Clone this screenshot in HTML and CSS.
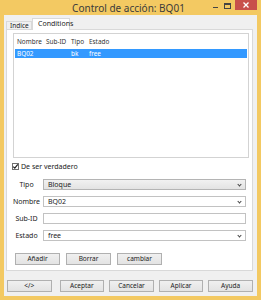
FILE: index.html
```html
<!DOCTYPE html>
<html lang="es">
<head>
<meta charset="utf-8">
<title>Control de acción: BQ01</title>
<link rel="stylesheet" href="styles.css">
</head>
<body>
<div class="window">
    <div class="titlebar">
        <div class="title">Control de acción: BQ01</div>
        <div class="controls">
            <span class="ctl min"><span class="dash"></span></span>
            <span class="ctl max"><span class="box"></span></span>
            <span class="ctl close">
                <svg width="6" height="6" viewBox="0 0 6 6"><path d="M0.5 0.5 L5.5 5.5 M5.5 0.5 L0.5 5.5" stroke="#fff" stroke-width="1.3"/></svg>
            </span>
        </div>
    </div>

    <div class="client">
        <div class="tabs">
            <div class="tab">Indice</div>
            <div class="tab active">Conditions</div>
        </div>

        <div class="panel">
            <div class="list">
                <div class="lrow head">
                    <span>Nombre</span><span>Sub-ID</span><span>Tipo</span><span>Estado</span>
                </div>
                <div class="lrow selected">
                    <span>BQ02</span><span></span><span>bk</span><span>free</span>
                </div>
            </div>

            <label class="check">
                <span class="cbox">
                    <svg width="7" height="7" viewBox="0 0 7 7"><path d="M1.2 3.6 L2.8 5.2 L5.8 1.4" fill="none" stroke="#222" stroke-width="1.2"/></svg>
                </span>
                De ser verdadero
            </label>

            <div class="form">
                <span class="lbl">Tipo</span>
                <div class="field select gray">Bloque<span class="arrow"></span></div>

                <span class="lbl">Nombre</span>
                <div class="field select">BQ02<span class="arrow"></span></div>

                <span class="lbl">Sub-ID</span>
                <div class="field"></div>

                <span class="lbl">Estado</span>
                <div class="field select">free<span class="arrow"></span></div>
            </div>

            <div class="actions">
                <button class="btn">Añadir</button>
                <button class="btn">Borrar</button>
                <button class="btn">cambiar</button>
            </div>
        </div>

        <div class="footer">
            <button class="btn first">&lt;/&gt;</button>
            <button class="btn">Aceptar</button>
            <button class="btn">Cancelar</button>
            <button class="btn">Aplicar</button>
            <button class="btn">Ayuda</button>
        </div>
    </div>
</div>
</body>
</html>
```

FILE: styles.css
```css
* {
    box-sizing: border-box;
}

body {
    margin: 0;
    width: 261px;
    height: 300px;
    font-family: "Noto Sans", "DejaVu Sans", sans-serif;
    font-size: 7px;
    color: #222;
}

.window {
    height: 300px;
    background: #f3c962;
    display: flex;
    flex-direction: column;
}

.titlebar {
    height: 15px;
    display: flex;
    padding-left: 48px;
}

.title {
    flex: 1;
    text-align: center;
    font-size: 10px;
    line-height: 16px;
    color: #3b3b3b;
}

.controls {
    display: flex;
    align-items: flex-start;
    padding-right: 4px;
}

.ctl {
    display: flex;
    justify-content: center;
    height: 10px;
}

.min {
    width: 12px;
}

.min .dash {
    width: 5px;
    height: 1px;
    margin-top: 7px;
    background: #444;
}

.max {
    width: 12px;
    margin-right: 2px;
}

.max .box {
    width: 7px;
    height: 6px;
    margin-top: 3px;
    border: 1px solid #444;
    border-top-width: 2px;
}

.close {
    width: 22px;
    background: #c8504b;
    align-items: center;
}

.client {
    flex: 1;
    margin: 0 4px 4px 4px;
    background: #f0f0f0;
    display: flex;
    flex-direction: column;
    padding: 2px 4px 4px 2px;
}

.tabs {
    display: flex;
    align-items: flex-end;
    height: 12px;
    position: relative;
    z-index: 1;
}

.tab {
    height: 8px;
    width: 26px;
    border: 1px solid #d9d9d9;
    border-bottom: none;
    background: #f0f0f0;
    padding-left: 3px;
    line-height: 8px;
    font-size: 6.5px;
}

.tab.active {
    height: 12px;
    width: 38px;
    background: #fff;
    line-height: 10px;
    padding-left: 5px;
    margin-bottom: -1px;
    font-size: 7px;
}

.panel {
    height: 242px;
    border: 1px solid #d9d9d9;
    background: #fff;
    padding: 3px 3px 5px 6px;
    display: flex;
    flex-direction: column;
}

.list {
    height: 125px;
    border: 1px solid #d3d3d3;
    padding: 2px 1px 0 1px;
    font-size: 6.4px;
}

.lrow {
    display: grid;
    grid-template-columns: 29px 25px 18px 1fr;
}

.lrow span {
    padding-left: 2px;
    white-space: nowrap;
}

.head {
    height: 11px;
    line-height: 11px;
    color: #333;
}

.selected {
    margin-top: 2px;
    height: 9px;
    line-height: 9px;
    background: #3399ff;
    color: #fff;
}

.check {
    display: flex;
    align-items: center;
    gap: 2px;
    margin-top: 4px;
    height: 8px;
    margin-left: -1px;
}

.cbox {
    width: 7px;
    height: 7px;
    border: 1px solid #707070;
    background: #fff;
    display: flex;
}

.cbox svg {
    margin: -1px;
}

.form {
    margin-top: 9px;
    margin-left: -6px;
    margin-right: 3px;
    display: grid;
    grid-template-columns: 36px 1fr;
    row-gap: 6px;
}

.lbl {
    text-align: center;
    line-height: 11px;
    padding-left: 3px;
}

.field {
    height: 11px;
    border: 1px solid #c2c2c2;
    background: #fff;
    line-height: 9px;
    padding-left: 4px;
    position: relative;
}

.field.gray {
    background: linear-gradient(#f1f1f1, #e3e3e3);
    border-color: #b4b4b4;
}

.arrow {
    position: absolute;
    right: 4px;
    top: 3px;
    width: 3px;
    height: 3px;
    border-right: 1px solid #444;
    border-bottom: 1px solid #444;
    transform: rotate(45deg);
}

.actions {
    display: flex;
    gap: 6px;
    margin-top: 12px;
    margin-left: 2px;
}

.btn {
    width: 45px;
    height: 12px;
    padding: 0;
    border: 1px solid #b0b0b0;
    background: linear-gradient(#f0f0f0, #e3e3e3);
    font-family: "Noto Sans", "DejaVu Sans", sans-serif;
    font-size: 6.5px;
    color: #222;
    line-height: 10px;
}

.footer {
    display: flex;
    gap: 5px;
    margin-top: 9px;
    padding-left: 1px;
}

.footer .first {
    margin-right: 3px;
}
```
